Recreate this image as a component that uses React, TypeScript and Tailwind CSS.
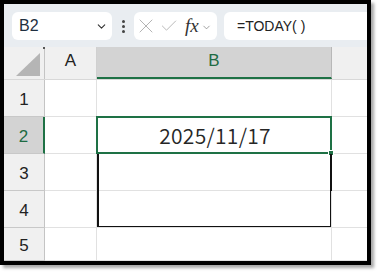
import { Check, ChevronDown, X } from "lucide-react";

const rows = [1, 2, 3, 4, 5];

function FormulaBar() {
    return (
        <div className="flex h-[43px] items-center bg-[#e9edf1] pl-2 pt-px">
            <div className="flex h-[28px] w-[100px] items-center justify-between rounded-md bg-white pl-[7px] pr-[4px]">
                <span className="text-[16px] text-[#1f2f40]">B2</span>
                <ChevronDown size={13} strokeWidth={2} className="text-[#333]" />
            </div>
            <div className="flex w-[22px] flex-col items-center gap-[2px]">
                <div className="h-[3px] w-[3px] rounded-full bg-[#444]" />
                <div className="h-[3px] w-[3px] rounded-full bg-[#444]" />
                <div className="h-[3px] w-[3px] rounded-full bg-[#444]" />
            </div>
            <div className="flex h-[28px] w-[83px] items-center rounded-md bg-white pl-0">
                <X size={24} strokeWidth={1} className="text-[#b4b4b4]" />
                <Check size={20} strokeWidth={1.1} className="ml-[1px] text-[#b4b4b4]" />
                <span className="ml-[6px] font-['Liberation_Serif'] text-[19px] italic text-[#333]">fx</span>
                <ChevronDown size={11} strokeWidth={1.5} className="ml-[2px] mt-[2px] text-[#777]" />
            </div>
            <div className="ml-[7px] flex h-[28px] flex-1 items-center rounded-l-md bg-white pl-[13px]">
                <span className="text-[14px] text-[#222]">=TODAY( )</span>
            </div>
        </div>
    );
}

function HeaderRow() {
    return (
        <div className="flex h-[33px] border-b border-[#d8d8d8]">
            <div className="relative flex w-[41px] items-end justify-end border-r border-[#c4c4c4] bg-[#f0f0f0] pb-[3px] pr-[4px]">
                <div className="absolute -right-[1px] top-0 h-[2px] w-[2px] bg-[#555]" />
                <svg width="24" height="23" viewBox="0 0 24 23">
                    <polygon points="24,0 24,23 0,23" fill="#b5b5b5" />
                </svg>
            </div>
            <div className="flex w-[52px] items-center justify-center border-r border-[#d0d0d0] bg-[#f0f0f0] pb-[4px] text-[17px] text-[#222]">A</div>
            <div className="flex w-[235px] items-center justify-center border-b-2 border-r border-[#1e7145] border-r-[#b8b8b8] bg-[#d3d3d3] pb-[3px] text-[17px] text-[#1e6b43]">B</div>
            <div className="flex-1 bg-[#f0f0f0]" />
        </div>
    );
}

function Row({ n }: { n: number }) {
    const selected = n === 2;
    return (
        <div className={`flex ${n === 5 ? "h-[33px]" : "h-[37px]"}`}>
            <div
                className={`flex w-[41px] items-center justify-center border-b border-[#c8c8c8] pt-[3px] text-[17px] ${
                    selected
                        ? "border-r-2 border-r-[#1e7145] bg-[#d3d3d3] text-[#1e6b43]"
                        : "border-r border-r-[#c4c4c4] bg-[#f0f0f0] text-[#222]"
                }`}
            >
                {n}
            </div>
            <div className="w-[52px] border-b border-r border-[#e1e1e1]" />
            <div className="relative flex w-[235px] items-center justify-center border-b border-r border-[#e1e1e1]">
                {selected && (
                    <>
                        <div className="absolute -left-[1px] -top-[1px] bottom-[-1px] right-[-1px] border-2 border-[#1e7145]" />
                        <span className="pt-[2px] pl-[2px] font-['Noto_Sans_CJK_JP',sans-serif] text-[21px] font-[350] tracking-[0.3px] text-[#262626]">2025/11/17</span>
                        <div className="absolute -bottom-[3px] -right-[3px] h-[6px] w-[6px] border border-white bg-[#1e7145]" />
                    </>
                )}
                {n === 3 && (
                    <div className="absolute left-0 top-0 h-[74px] w-[235px] border-2 border-t-0 border-[#111]" />
                )}
            </div>
            <div className="flex-1 border-b border-[#e1e1e1]" />
        </div>
    );
}

export default function App() {
    return (
        <div className="h-[273px] w-[379px] bg-white font-['Liberation_Sans',sans-serif]">
            <div className="h-[265px] w-[371px] overflow-hidden border-4 border-black shadow-[3px_3px_3px_rgba(0,0,0,0.35)]">
                <FormulaBar />
                <HeaderRow />
                {rows.map((n) => (
                    <Row key={n} n={n} />
                ))}
            </div>
        </div>
    );
}
